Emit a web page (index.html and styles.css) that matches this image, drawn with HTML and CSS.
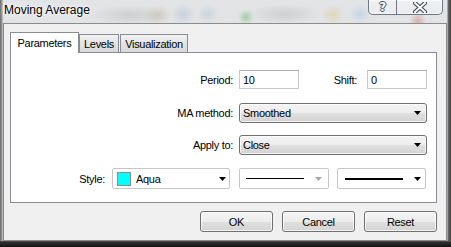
FILE: index.html
```html
<!DOCTYPE html>
<html>
  <head>
    <title>Moving Average</title>
    <link rel="stylesheet" href="styles.css">
  </head>
  <body>
    <div class="window">
      <div class="titlebar">
        <span class="title">Moving Average</span>
        <div class="caption-buttons">
          <span class="cap-btn cap-help">?</span>
          <span class="cap-btn cap-close">
            <svg width="14" height="11" viewBox="0 0 14 11">
              <path d="M2 1 L12 10 M12 1 L2 10" stroke="#3b4452" stroke-width="4" stroke-linecap="square" fill="none"/>
              <path d="M2 1 L12 10 M12 1 L2 10" stroke="#ffffff" stroke-width="2" stroke-linecap="square" fill="none"/>
            </svg>
          </span>
        </div>
      </div>

      <div class="client">
        <!-- вкладки -->
        <div class="tabs">
          <span class="tab tab-active">Parameters</span>
          <span class="tab tab-levels">Levels</span>
          <span class="tab tab-visual">Visualization</span>
        </div>

        <div class="pane">
          <div class="row row-period">
            <span class="lbl lbl-main">Period:</span>
            <span class="edit">10</span>
            <span class="lbl lbl-shift">Shift:</span>
            <span class="edit">0</span>
          </div>
          <div class="row row-method">
            <span class="lbl lbl-main">MA method:</span>
            <span class="select">
              <span class="select-text">Smoothed</span>
              <svg class="arrow" width="7" height="4" viewBox="0 0 7 4"><polygon points="0,0 7,0 3.5,4" fill="#000"/></svg>
            </span>
          </div>
          <div class="row row-apply">
            <span class="lbl lbl-main">Apply to:</span>
            <span class="select">
              <span class="select-text">Close</span>
              <svg class="arrow" width="7" height="4" viewBox="0 0 7 4"><polygon points="0,0 7,0 3.5,4" fill="#000"/></svg>
            </span>
          </div>
          <div class="row row-style">
            <span class="lbl lbl-style">Style:</span>
            <span class="combo combo-color">
              <span class="swatch"></span>
              <span class="combo-text">Aqua</span>
              <svg class="arrow" width="7" height="4" viewBox="0 0 7 4"><polygon points="0,0 7,0 3.5,4" fill="#000"/></svg>
            </span>
            <span class="combo combo-line">
              <span class="line line-thin"></span>
              <svg class="arrow" width="7" height="4" viewBox="0 0 7 4"><polygon points="0,0 7,0 3.5,4" fill="#a7a7a7"/></svg>
            </span>
            <span class="combo combo-width">
              <span class="line line-thick"></span>
              <svg class="arrow" width="7" height="4" viewBox="0 0 7 4"><polygon points="0,0 7,0 3.5,4" fill="#000"/></svg>
            </span>
          </div>
        </div>

        <div class="buttons">
          <span class="btn">OK</span>
          <span class="btn">Cancel</span>
          <span class="btn">Reset</span>
        </div>
      </div>
    </div>
  </body>
</html>
```

FILE: styles.css
```css
/* сброс */
* {
  box-sizing: border-box;
  margin: 0;
  padding: 0;
}

body {
  width: 451px;
  height: 247px;
  overflow: hidden;
  font-family: "Liberation Sans", Arial, sans-serif;
  font-size: 11px;
  letter-spacing: -0.3px;
  color: #000;
}

/* окно со стеклянной рамкой */
.window {
  width: 451px;
  height: 247px;
  display: flex;
  flex-direction: column;
  background:
    linear-gradient(to top, #151515 0, #303030 5px, #5a5a5a 6px, transparent 6px),
    linear-gradient(to left, #3c3c3c 0, #6e6e6e 3px, transparent 4px),
    linear-gradient(to right, #6a6a6a 0, #9a9a9a 2px, #d0d0d0 3px, transparent 3px),
    radial-gradient(ellipse 40px 10px at 130px 15px, rgba(160, 160, 160, 0.3), transparent),
    radial-gradient(ellipse 14px 10px at 158px 15px, rgba(185, 170, 130, 0.35), transparent),
    radial-gradient(ellipse 12px 10px at 183px 14px, rgba(150, 175, 205, 0.35), transparent),
    radial-gradient(ellipse 10px 10px at 208px 14px, rgba(160, 180, 205, 0.3), transparent),
    radial-gradient(ellipse 8px 8px at 246px 17px, rgba(90, 180, 90, 0.45), transparent),
    radial-gradient(ellipse 36px 10px at 285px 14px, rgba(160, 160, 160, 0.3), transparent),
    radial-gradient(ellipse 12px 10px at 333px 15px, rgba(220, 195, 130, 0.4), transparent),
    radial-gradient(ellipse 10px 10px at 360px 14px, rgba(160, 195, 225, 0.4), transparent),
    radial-gradient(ellipse 8px 8px at 418px 21px, rgba(200, 110, 90, 0.45), transparent),
    linear-gradient(#e2e4e6, #d6d9dc);
}

.titlebar {
  height: 23px;
  display: flex;
  justify-content: space-between;
  align-items: flex-start;
  flex-shrink: 0;
}

.title {
  padding: 3px 0 0 4px;
  font-size: 12px;
  line-height: 15px;
  letter-spacing: 0;
  text-shadow: 0 0 6px #fff, 0 0 3px #fff;
}

.caption-buttons {
  display: flex;
  margin-right: 8px;
  height: 15px;
  border: 1px solid #6d7682;
  border-top: none;
  border-radius: 0 0 5px 5px;
  background: linear-gradient(rgba(255, 255, 255, 0.45), rgba(235, 238, 242, 0.75));
  box-shadow: inset 0 0 0 1px rgba(255, 255, 255, 0.6);
}

.cap-btn {
  display: flex;
  align-items: center;
  justify-content: center;
  height: 14px;
}

.cap-help {
  width: 28px;
  border-right: 1px solid #6d7682;
  font-family: "DejaVu Sans", sans-serif;
  font-weight: bold;
  font-size: 12px;
  color: #fff;
  text-shadow: 1px 0 0 #3b4452, -1px 0 0 #3b4452, 0 1px 0 #3b4452, 0 -1px 0 #3b4452;
}

.cap-close {
  width: 45px;
}

/* клиентская область */
.client {
  margin: 0 4px 0 3px;
  height: 218px;
  border: 1px solid #8c8c8c;
  background-color: #f0f0f0;
  padding: 8px 9px 0 6px;
  display: flex;
  flex-direction: column;
}

.tabs {
  display: flex;
  align-items: flex-end;
  height: 20px;
}

.tab {
  height: 18px;
  border: 1px solid #898c95;
  border-bottom: none;
  background: linear-gradient(#f2f2f2, #e3e3e3 50%, #d9d9d9);
  display: flex;
  align-items: center;
  justify-content: center;
  padding-top: 1px;
}

.tab-active {
  position: relative;
  z-index: 1;
  width: 69px;
  height: 21px;
  margin-bottom: -1px;
  background: #fff;
  padding-bottom: 2px;
}

.tab-levels {
  width: 40px;
}

.tab-visual {
  width: 68px;
  margin-left: 1px;
}

.pane {
  height: 151px;
  border: 1px solid #898c95;
  background-color: #fff;
  padding-top: 17px;
}

.row {
  display: flex;
  align-items: center;
}

.row-period {
  height: 19px;
}

.row-method {
  height: 20px;
  margin-top: 14px;
}

.row-apply {
  height: 20px;
  margin-top: 12px;
}

.row-style {
  height: 21px;
  margin-top: 13px;
}

.lbl {
  text-align: right;
}

.lbl-main {
  width: 222px;
  margin-right: 6px;
}

.lbl-shift {
  width: 58px;
  margin-right: 10px;
}

.lbl-style {
  width: 94px;
  margin-right: 7px;
}

.edit {
  width: 60px;
  height: 19px;
  border: 1px solid #c5cad0;
  border-top-color: #abadb3;
  padding: 2px 0 0 3px;
  line-height: 14px;
}

.select {
  width: 188px;
  height: 20px;
  border: 1px solid #707070;
  border-radius: 3px;
  background: linear-gradient(#f4f4f4, #ededed 50%, #e0e0e0 50%, #d3d3d3);
  box-shadow: inset 0 0 0 1px rgba(255, 255, 255, 0.7);
  display: flex;
  align-items: center;
  justify-content: space-between;
  padding: 0 5px 0 3px;
}

.combo {
  height: 21px;
  border: 1px solid #c3c6cb;
  border-radius: 2px;
  background-color: #fff;
  display: flex;
  align-items: center;
}

.combo-color {
  width: 118px;
  padding: 0 3px 0 4px;
  margin-right: 9px;
}

.swatch {
  width: 14px;
  height: 14px;
  border: 1px solid #8d8d8d;
  background-color: #00ffff;
  margin-right: 5px;
}

.combo-text {
  flex: 1;
}

.combo-line {
  width: 90px;
  padding: 0 6px 0 6px;
  margin-right: 8px;
}

.combo-width {
  width: 89px;
  padding: 0 4px 0 7px;
}

.line {
  flex: 1;
  margin-right: 11px;
  background-color: #000;
}

.line-thin {
  height: 1px;
}

.line-thick {
  height: 2px;
  margin-right: 11px;
}

/* кнопки внизу */
.buttons {
  display: flex;
  justify-content: flex-end;
  gap: 9px;
  margin-top: 8px;
}

.btn {
  width: 73px;
  height: 21px;
  border: 1px solid #707070;
  border-radius: 3px;
  background: linear-gradient(#f4f4f4, #ededed 50%, #e0e0e0 50%, #d3d3d3);
  box-shadow: inset 0 0 0 1px rgba(255, 255, 255, 0.75);
  display: flex;
  align-items: center;
  justify-content: center;
}
```
